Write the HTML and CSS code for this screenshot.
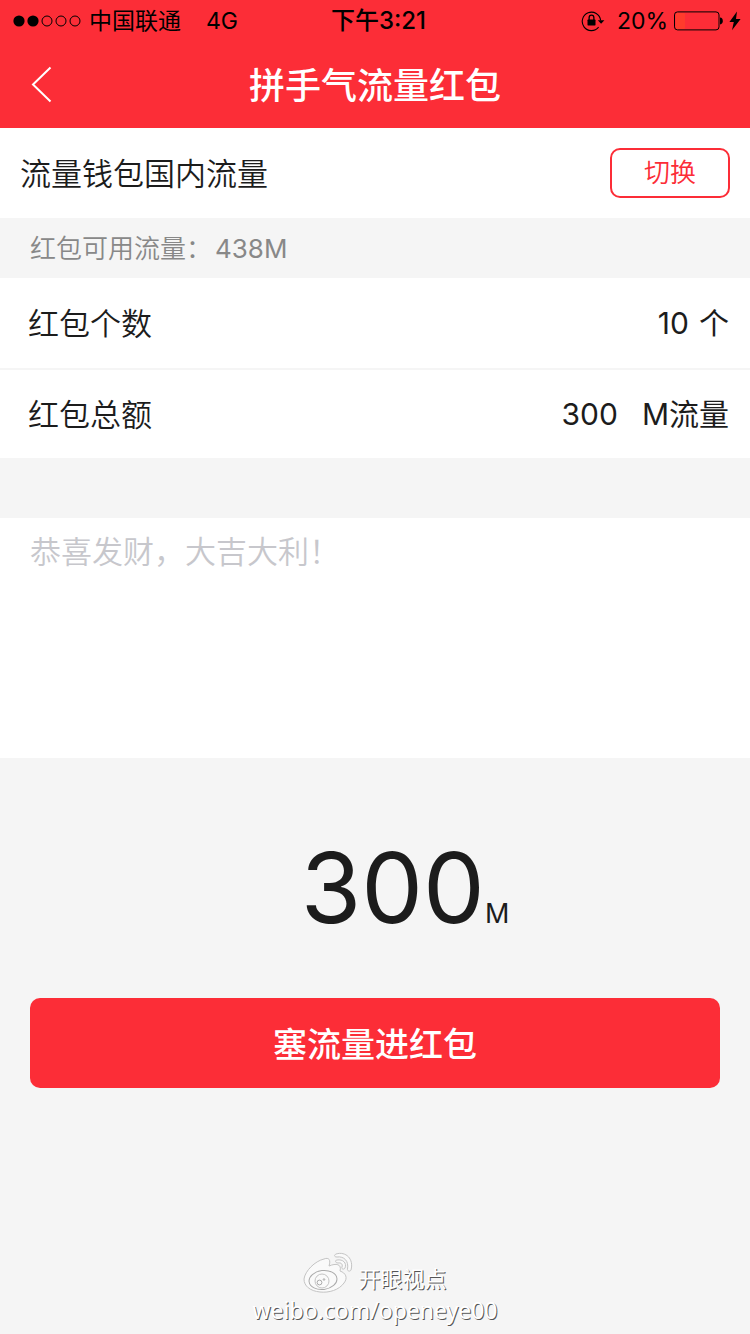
FILE: index.html
```html
<!DOCTYPE html>
<html lang="zh-CN">
<head>
<meta charset="utf-8">
<meta name="viewport" content="width=device-width, initial-scale=1">
<title>拼手气流量红包</title>
<link rel="stylesheet" href="styles.css">
</head>
<body>
<div class="app">
  <header class="header">
    <div class="status">
      <div class="status-left">
        <svg class="signal" width="70" height="14" viewBox="0 0 70 14" aria-hidden="true">
          <circle cx="7" cy="7" r="5.6"/><circle cx="21" cy="7" r="5.6"/>
          <g fill="none" stroke="#000" stroke-width="1"><circle cx="35" cy="7" r="5"/><circle cx="49" cy="7" r="5"/><circle cx="63" cy="7" r="5"/></g>
        </svg>
        <span class="carrier">中国联通</span>
        <span>4G</span>
      </div>
      <div class="status-time">下午3:21</div>
      <div class="status-right">
        <svg class="lock" width="24" height="22" viewBox="0 0 24 22" aria-hidden="true">
          <path d="M17.600 17.200A9.200 9.200 0 1 1 19.600 10.400" fill="none" stroke="#000" stroke-width="1.1"/>
          <path d="M16.800 10.200H23.400L20.100 13.800Z"/>
          <rect x="6.500" y="9.600" width="8" height="5.800" rx=".6"/>
          <path d="M8.100 10V7.800a2.400 2.700 0 0 1 4.800 0V10" fill="none" stroke="#000" stroke-width="1.3"/>
        </svg>
        <span>20%</span>
        <svg class="battery" width="50" height="20" viewBox="0 0 50 20" aria-hidden="true">
          <rect x="2" y="2" width="9" height="16" rx="1" fill="#ff3b2c"/>
          <rect x=".5" y=".9" width="44.5" height="18" rx="3" fill="none" stroke="#000"/>
          <path d="M46 6.600c3.800 0 3.800 6.800 0 6.800z"/>
        </svg>
        <svg class="bolt" width="12" height="20" viewBox="0 0 12 20" aria-hidden="true"><path d="M8 .6 .4 11h4.400L3 19.200 11.600 8H7Z"/></svg>
      </div>
    </div>
    <div class="nav">
      <button class="back" type="button" aria-label="返回">
        <svg width="22" height="38" viewBox="0 0 22 38" aria-hidden="true"><path d="M20.500 2.500 3 19.500 20.500 36.500" fill="none" stroke="#fff" stroke-width="2"/></svg>
      </button>
      <h1 class="title">拼手气流量红包</h1>
    </div>
  </header>
  <main class="main">
    <section class="wallet">
      <h2 class="wallet-name">流量钱包国内流量</h2>
      <button class="switch" type="button">切换</button>
    </section>
    <p class="available">红包可用流量：<span class="available-value">438M</span></p>
    <div class="row">
      <label for="count">红包个数</label>
      <input class="value" id="count" type="text" inputmode="numeric" value="10">
      <span class="unit">个</span>
    </div>
    <div class="row row-total">
      <label for="total">红包总额</label>
      <input class="value" id="total" type="text" inputmode="numeric" value="300">
      <span class="unit">M流量</span>
    </div>
    <textarea class="message" aria-label="祝福语" placeholder="恭喜发财，大吉大利！"></textarea>
    <p class="amount"><span class="amount-number">300</span><span class="amount-unit">M</span></p>
    <button class="submit" type="button">塞流量进红包</button>
  </main>
  <footer class="mark">
    <div class="mark-top">
      <svg width="50" height="42" viewBox="0 0 50 42" aria-hidden="true">
        <g fill="#fafafa" stroke="#c4c4c4" stroke-width="1">
          <path d="M21 7C26 5 28 8 26 14C33 11 39 12 37 19C43 21 45 26 41 31C36 38 26 41 17 40C7 39 1 34 1 27C2 19 12 9 21 7Z"/>
          <ellipse cx="20" cy="28" rx="14" ry="9.5" transform="rotate(-7 20 28)" stroke="#aaa"/>
          <circle cx="19" cy="29" r="7"/>
          <circle cx="16.5" cy="30.5" r="2.4" stroke="#aaa"/>
          <circle cx="21" cy="27.5" r=".8" stroke="#aaa"/>
          <path d="M33 2C43-1 51 7 48 18C47 20 44 19 44.500 17C46 9 41 4 34 5C31 5 31 3 33 2Z"/>
          <path d="M34 8C40 7 44 11 42 16C41 18 38 17 39 15C40 12 38 10.500 35 11C32 11 32 8 34 8Z"/>
        </g>
      </svg>
      <span>开眼视点</span>
    </div>
    <div class="mark-url">weibo.com/openeye00</div>
  </footer>
</div>
</body>
</html>
```
FILE: styles.css
```css
* { box-sizing: border-box; }

body {
  margin: 0;
  background: #f5f5f5;
  color: #1c1c1c;
  font-family: Inter, "Noto Sans CJK SC", sans-serif;
  font-size: 30px;
  font-weight: 350;
}

h1, h2, p { margin: 0; font-weight: inherit; }

button, input, textarea {
  margin: 0;
  padding: 0;
  border: 0;
  background: none;
  color: inherit;
  font: inherit;
}

.app { display: flex; flex-direction: column; min-height: 100vh; }

.header { background: #fc2d37; }

.status {
  display: grid;
  grid-template-columns: 1fr auto 1fr;
  align-items: center;
  height: 40px;
  padding: 0 9px 0 12px;
  color: #000;
  font-size: 23px;
  font-weight: 400;
  line-height: 42px;
}
.status-left, .status-right { display: flex; align-items: center; }
.status-right { justify-content: flex-end; }
.status-time { padding-left: 4px; font-size: 24px; font-weight: 500; }
.signal { margin-right: 7px; }
.carrier { margin-right: 25px; }
.lock { margin-right: 12px; }
.battery { margin: 0 5px 0 6px; }

.nav {
  display: grid;
  grid-template-columns: 80px 1fr 80px;
  align-items: center;
  height: 88px;
  color: #fff;
}
.back { display: flex; align-items: center; height: 88px; padding-left: 30px; }
.title { padding-top: 4px; font-size: 36px; font-weight: 500; line-height: 84px; text-align: center; }

.main { display: flex; flex-direction: column; }

.wallet {
  display: flex;
  align-items: center;
  justify-content: space-between;
  height: 90px;
  padding: 0 20px;
  background: #fff;
}
.wallet-name { padding-top: 2px; font-size: 31px; line-height: 88px; }
.switch {
  width: 120px;
  height: 50px;
  border: 2px solid #fc2d37;
  border-radius: 10px;
  color: #fc2d37;
  font-size: 26px;
  line-height: 46px;
}

.available { padding: 2px 30px 0; color: #888; font-size: 26px; line-height: 58px; }
.available-value { margin-left: 3px; font-weight: 400; }

.row {
  display: flex;
  align-items: center;
  height: 90px;
  padding: 0 21px 0 28px;
  background: #fff;
  line-height: 88px;
}
.row label { padding-top: 2px; font-size: 31px; }
.value { flex: 1; min-width: 0; height: 88px; margin-right: 10px; font-weight: 400; text-align: right; }
.unit { font-weight: 400; }
.row-total { border-top: 2px solid #f5f5f5; }
.row-total .value { margin-right: 24px; }

.message {
  display: block;
  width: 100%;
  height: 240px;
  margin-top: 60px;
  padding: 12px 30px;
  background: #fff;
  font-size: 31px;
  line-height: 44px;
  resize: none;
}
.message::placeholder { color: #c7c7cc; opacity: 1; }

.amount {
  display: flex;
  align-items: baseline;
  justify-content: center;
  margin-top: 70px;
  padding-left: 60px;
  font-weight: 400;
  line-height: 120px;
}
.amount-number { font-size: 98px; }
.amount-unit { font-size: 27px; }

.submit {
  height: 90px;
  margin: 24px 30px 50px;
  padding-bottom: 2px;
  border-radius: 10px;
  background: #fc2d37;
  color: #fff;
  font-size: 34px;
  font-weight: 500;
}

.mark {
  display: flex;
  flex-direction: column;
  align-items: center;
  margin-top: auto;
  padding-bottom: 8px;
  color: #fff;
  font-family: "Noto Sans", "Noto Sans CJK SC", sans-serif;
  font-size: 22px;
  font-weight: 400;
  line-height: 32px;
  text-shadow: 1px 1px 0 #555;
}
.mark-top { display: flex; align-items: flex-end; gap: 5px; }
.mark-url { font-size: 23px; }
```
